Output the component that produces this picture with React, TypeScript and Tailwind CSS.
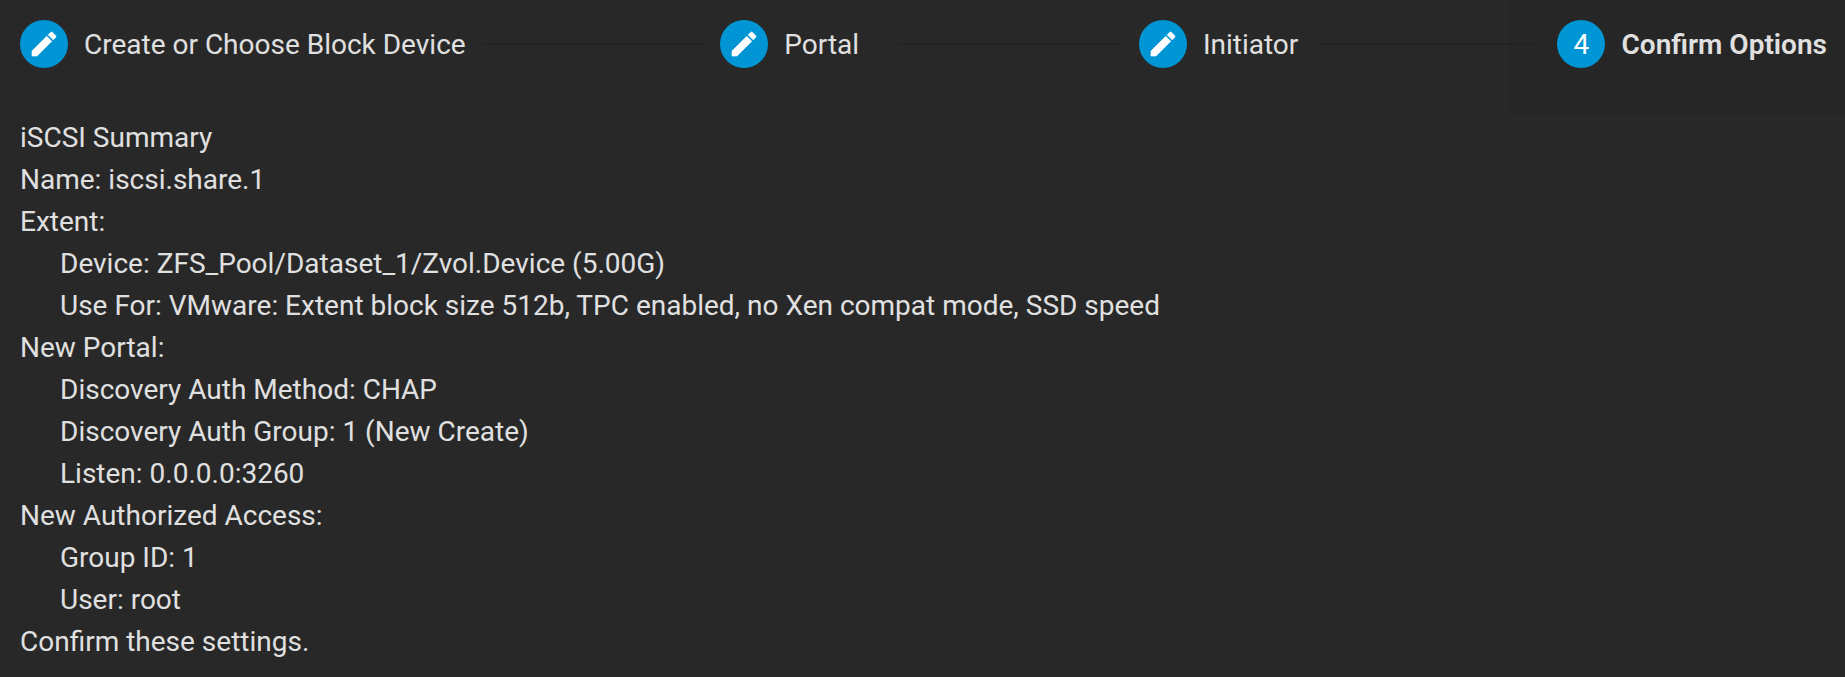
type Step = { label: string; done: boolean };
type Line = { text: string; nested?: boolean };

const steps: Step[] = [
  { label: "Create or Choose Block Device", done: true },
  { label: "Portal", done: true },
  { label: "Initiator", done: true },
  { label: "Confirm Options", done: false },
];

const summary: Line[] = [
  { text: "iSCSI Summary" },
  { text: "Name: iscsi.share.1" },
  { text: "Extent:" },
  { text: "Device: ZFS_Pool/Dataset_1/Zvol.Device (5.00G)", nested: true },
  { text: "Use For: VMware: Extent block size 512b, TPC enabled, no Xen compat mode, SSD speed", nested: true },
  { text: "New Portal:" },
  { text: "Discovery Auth Method: CHAP", nested: true },
  { text: "Discovery Auth Group: 1 (New Create)", nested: true },
  { text: "Listen: 0.0.0.0:3260", nested: true },
  { text: "New Authorized Access:" },
  { text: "Group ID: 1", nested: true },
  { text: "User: root", nested: true },
  { text: "Confirm these settings." },
];

function PencilIcon() {
  return (
    <svg viewBox="0 0 24 24" className="size-8" fill="currentColor" stroke="currentColor" strokeWidth="0.5">
      <path d="M3 17.25V21h3.75L17.81 9.94l-3.75-3.75L3 17.25z" />
      <path d="M20.71 7.04c.39-.39.39-1.02 0-1.41l-2.34-2.34c-.39-.39-1.02-.39-1.41 0l-1.83 1.83 3.75 3.75 1.83-1.83z" />
    </svg>
  );
}

function StepHeader({ step, index, last }: { step: Step; index: number; last: boolean }) {
  return (
    <div
      className={
        last
          ? "flex h-[116px] shrink-0 items-start bg-[#262626] pt-5 pr-[18px] pl-12"
          : "flex h-[116px] shrink-0 items-start pt-5"
      }
    >
      <div className="mr-4 flex size-12 shrink-0 items-center justify-center rounded-full bg-[#0095d5] text-white">
        {step.done ? <PencilIcon /> : <span className="pt-0.5">{index + 1}</span>}
      </div>
      <div className={last ? "min-w-[100px] leading-[50px] font-semibold" : "min-w-[100px] leading-[50px]"}>
        {step.label}
      </div>
    </div>
  );
}

export default function App() {
  return (
    <main className="h-[677px] w-full overflow-hidden bg-[#282828] font-[Roboto,sans-serif] text-[28px] whitespace-nowrap text-[#e0e0e0]">
      <header className="flex pl-5">
        {steps.map((step, i) => (
          <div key={step.label} className={i === steps.length - 1 ? "contents" : "flex grow"}>
            <StepHeader step={step} index={i} last={i === steps.length - 1} />
            {i < steps.length - 1 && (
              <div
                className={
                  i === steps.length - 2
                    ? "relative z-10 mt-[43px] -mr-8 ml-4 h-0.5 grow bg-[#232323]"
                    : "mx-4 mt-[43px] h-0.5 grow bg-[#232323]"
                }
              />
            )}
          </div>
        ))}
      </header>
      <section className="pt-px pl-5 leading-[42px]">
        {summary.map((line) => (
          <p key={line.text} className={line.nested ? "pl-10" : undefined}>
            {line.text}
          </p>
        ))}
      </section>
    </main>
  );
}
